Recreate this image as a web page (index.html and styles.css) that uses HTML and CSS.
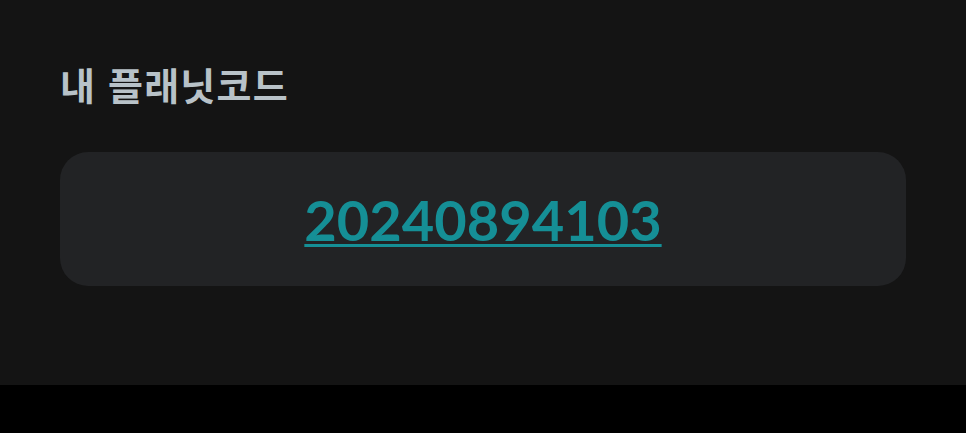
FILE: index.html
```html
<!DOCTYPE html>
<html lang="ko">
<head>
    <meta charset="UTF-8">
    <meta name="viewport" content="width=device-width, initial-scale=1.0">
    <title>내 플래닛코드</title>
    <link rel="stylesheet" href="styles.css">
</head>
<body>
    <section class="panel">
        <h2 class="panel-title">내 플래닛코드</h2>
        <div class="code-card">
            <a class="code-link" href="#">20240894103</a>
        </div>
    </section>
</body>
</html>
```

FILE: styles.css
```css
html, body {
    margin: 0;
    padding: 0;
    background-color: #000;
}
.panel {
    background-color: #141414;
    height: 385px;
    box-sizing: border-box;
    padding: 61px 60px 0;
}
.panel-title {
    margin: 0 0 45px;
    font-family: "Noto Sans CJK KR", "Noto Sans", sans-serif;
    font-weight: 700;
    font-size: 38px;
    line-height: 46px;
    letter-spacing: 1.2px;
    color: #b8c2c8;
}
.code-card {
    background-color: #222325;
    border-radius: 28px;
    height: 134px;
    display: flex;
    align-items: center;
    justify-content: center;
}
.code-link {
    font-family: Lato, sans-serif;
    font-weight: 700;
    font-size: 56px;
    color: #158f96;
    text-decoration: underline;
    text-decoration-thickness: 3px;
    text-underline-offset: 3px;
}
```
